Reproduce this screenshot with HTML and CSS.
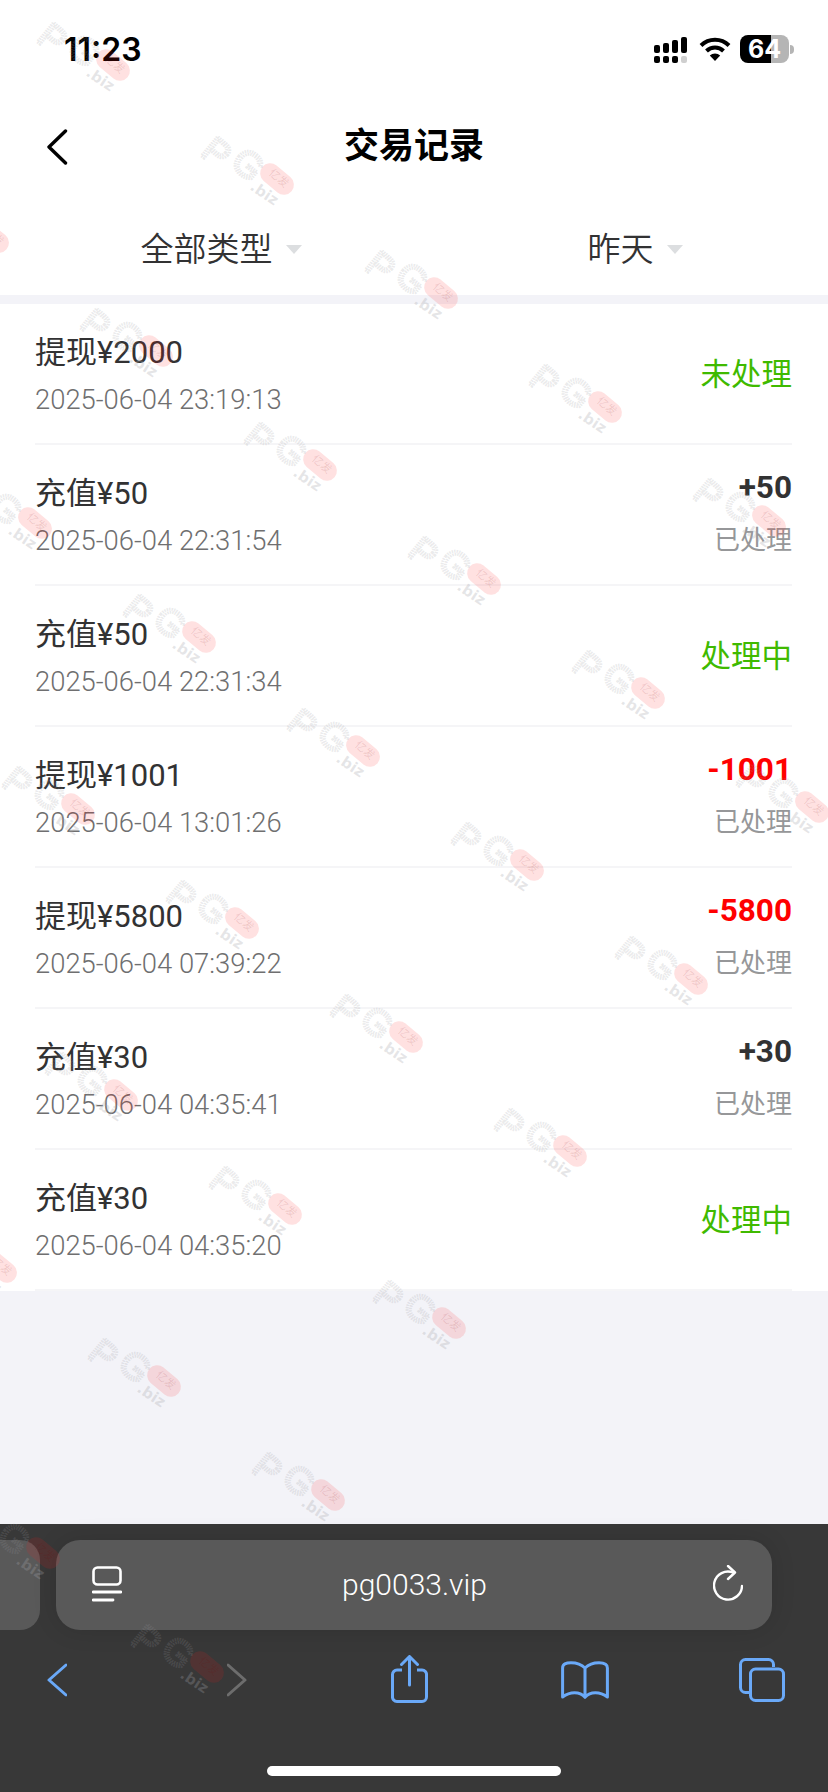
FILE: index.html
```html
<!DOCTYPE html>
<html lang="zh-CN">
<head>
<meta charset="utf-8">
<title>交易记录</title>
<link rel="stylesheet" href="styles.css">
</head>
<body>
<div class="page">
  <div class="app">
    <header class="status">
      <span class="clock">11:23</span>
      <div class="status-icons">
        <svg class="signal" width="33" height="26" viewBox="0 0 33 26"><g fill="#000"><rect x="0" y="8" width="6" height="8" rx="2"/><rect x="9" y="6" width="6" height="10" rx="2"/><rect x="18" y="3" width="6" height="13" rx="2"/><rect x="27" y="0" width="6" height="16" rx="2"/><rect x="0" y="19" width="6" height="7" rx="2"/><rect x="9" y="19" width="6" height="7" rx="2"/><rect x="18" y="19" width="6" height="7" rx="2"/><rect x="27" y="19" width="6" height="7" rx="2" fill="#cfcfcf"/></g></svg>
        <svg class="wifi" width="32" height="24" viewBox="0 0 32 24"><g fill="none" stroke="#000" stroke-width="4"><path d="M2 8.5a20 20 0 0 1 28 0"/><path d="M7.5 14a12.2 12.2 0 0 1 17 0"/></g><path d="M16 24l-5.2-5.4a7.4 7.4 0 0 1 10.4 0z" fill="#000"/></svg>
        <div class="battery"><div class="battery-body"><span class="battery-level">64</span></div><i class="battery-nub"></i></div>
      </div>
    </header>
    <nav class="topbar">
      <svg class="back" width="22" height="36" viewBox="0 0 22 36"><path d="M19.5 2L3 18l16.5 16" fill="none" stroke="#000" stroke-width="3.4" stroke-linecap="round" stroke-linejoin="round"/></svg>
      <h1 class="title">交易记录</h1>
    </nav>
    <div class="filters">
      <div class="filter"><span>全部类型</span><i class="caret"></i></div>
      <div class="filter"><span>昨天</span><i class="caret"></i></div>
    </div>
    <ul class="list">
      <li class="row"><div class="row-main"><div class="row-name">提现¥2000</div><div class="row-date">2025-06-04 23:19:13</div></div><div class="row-side"><div class="state state-green">未处理</div></div></li>
      <li class="row"><div class="row-main"><div class="row-name">充值¥50</div><div class="row-date">2025-06-04 22:31:54</div></div><div class="row-side has-amount"><div class="amount">+50</div><div class="state">已处理</div></div></li>
      <li class="row"><div class="row-main"><div class="row-name">充值¥50</div><div class="row-date">2025-06-04 22:31:34</div></div><div class="row-side"><div class="state state-green">处理中</div></div></li>
      <li class="row"><div class="row-main"><div class="row-name">提现¥1001</div><div class="row-date">2025-06-04 13:01:26</div></div><div class="row-side has-amount"><div class="amount amount-red">-1001</div><div class="state">已处理</div></div></li>
      <li class="row"><div class="row-main"><div class="row-name">提现¥5800</div><div class="row-date">2025-06-04 07:39:22</div></div><div class="row-side has-amount"><div class="amount amount-red">-5800</div><div class="state">已处理</div></div></li>
      <li class="row"><div class="row-main"><div class="row-name">充值¥30</div><div class="row-date">2025-06-04 04:35:41</div></div><div class="row-side has-amount"><div class="amount">+30</div><div class="state">已处理</div></div></li>
      <li class="row"><div class="row-main"><div class="row-name">充值¥30</div><div class="row-date">2025-06-04 04:35:20</div></div><div class="row-side"><div class="state state-green">处理中</div></div></li>
    </ul>
  </div>
  <footer class="browser">
    <div class="address-row">
      <div class="tab-stub"></div>
      <div class="address">
        <svg class="reader" width="30" height="36" viewBox="0 0 30 36"><rect x="1.5" y="1.5" width="27" height="17" rx="4" fill="none" stroke="#fff" stroke-width="2.6"/><path d="M1 26h28M1 34h20" stroke="#fff" stroke-width="2.8" stroke-linecap="round"/></svg>
        <span class="url">pg0033.vip</span>
        <svg class="reload" width="30" height="37" viewBox="0 0 30 37"><path d="M20 7.500A14 14 0 1 0 29 21" fill="none" stroke="#fff" stroke-width="2.400" stroke-linecap="round"/><path d="M15 1l7 6.500-7 6.500" fill="none" stroke="#fff" stroke-width="2.400" stroke-linecap="round" stroke-linejoin="round"/></svg>
      </div>
    </div>
    <div class="toolbar">
      <svg class="tool tool-back" width="20" height="34" viewBox="0 0 20 34"><path d="M19 2L2 17l17 15" fill="none" stroke="#6aa9f8" stroke-width="3" stroke-linecap="round" stroke-linejoin="round"/></svg>
      <svg class="tool tool-forward" width="20" height="34" viewBox="0 0 20 34"><path d="M1 2l17 15-17 15" fill="none" stroke="#6d6d6d" stroke-width="3" stroke-linecap="round" stroke-linejoin="round"/></svg>
      <svg class="tool tool-share" width="37" height="48" viewBox="0 0 37 48"><path d="M11 15H6a4.5 4.5 0 0 0-4.5 4.5v22A4.5 4.5 0 0 0 6 46.500h25a4.500 4.500 0 0 0 4.500-4.500v-22A4.500 4.500 0 0 0 31 15h-5" fill="none" stroke="#6aa9f8" stroke-width="3"/><path d="M18.500 30V2M10.500 9.500l8-8 8 8" fill="none" stroke="#6aa9f8" stroke-width="3" stroke-linecap="round" stroke-linejoin="round"/></svg>
      <svg class="tool tool-book" width="48" height="38" viewBox="0 0 48 38"><path d="M24 7C20 3 16 1.800 10 1.800 5 1.800 1.600 3 1.600 7v29c4-3 7-4.200 12-4.200 4.500 0 7.500 1.200 10.400 4.500 2.900-3.300 5.900-4.500 10.400-4.500 5 0 8 1.200 12 4.200V7c0-4-3.400-5.200-8.400-5.200C32 1.800 28 3 24 7zm0 0v29" fill="none" stroke="#6aa9f8" stroke-width="3" stroke-linejoin="round"/></svg>
      <svg class="tool tool-tabs" width="46" height="44" viewBox="0 0 46 44"><path d="M34.500 9V6.500a5 5 0 0 0-5-5H6.500a5 5 0 0 0-5 5v23a5 5 0 0 0 5 5H11" fill="none" stroke="#6aa9f8" stroke-width="3"/><rect x="11.500" y="11" width="33" height="31.500" rx="5" fill="none" stroke="#6aa9f8" stroke-width="3"/></svg>
    </div>
    <div class="home-bar"></div>
  </footer>
  <div class="watermarks">
    <svg class="wm" style="left:32px;top:13px">
      <g id="wm">
        <text class="wm-letter" transform="translate(3 27) rotate(40)">P</text>
        <text class="wm-letter" transform="translate(33 38) rotate(40)">G</text>
        <rect class="wm-pill" x="62" y="42" width="38" height="20" rx="10" transform="rotate(40 81 52)"/>
        <text class="wm-seal" transform="translate(72 47) rotate(40)">亿发</text>
        <text class="wm-small" transform="translate(53 62) rotate(34)">.biz</text>
      </g>
    </svg>
    <svg class="wm" style="left:196px;top:127px"><use href="#wm"/></svg>
    <svg class="wm" style="left:360px;top:241px"><use href="#wm"/></svg>
    <svg class="wm" style="left:524px;top:355px"><use href="#wm"/></svg>
    <svg class="wm" style="left:688px;top:469px"><use href="#wm"/></svg>
    <svg class="wm" style="left:-89px;top:185px"><use href="#wm"/></svg>
    <svg class="wm" style="left:75px;top:299px"><use href="#wm"/></svg>
    <svg class="wm" style="left:239px;top:413px"><use href="#wm"/></svg>
    <svg class="wm" style="left:403px;top:527px"><use href="#wm"/></svg>
    <svg class="wm" style="left:567px;top:641px"><use href="#wm"/></svg>
    <svg class="wm" style="left:731px;top:755px"><use href="#wm"/></svg>
    <svg class="wm" style="left:-46px;top:471px"><use href="#wm"/></svg>
    <svg class="wm" style="left:118px;top:585px"><use href="#wm"/></svg>
    <svg class="wm" style="left:282px;top:699px"><use href="#wm"/></svg>
    <svg class="wm" style="left:446px;top:813px"><use href="#wm"/></svg>
    <svg class="wm" style="left:610px;top:927px"><use href="#wm"/></svg>
    <svg class="wm" style="left:-3px;top:757px"><use href="#wm"/></svg>
    <svg class="wm" style="left:161px;top:871px"><use href="#wm"/></svg>
    <svg class="wm" style="left:325px;top:985px"><use href="#wm"/></svg>
    <svg class="wm" style="left:489px;top:1099px"><use href="#wm"/></svg>
    <svg class="wm" style="left:40px;top:1043px"><use href="#wm"/></svg>
    <svg class="wm" style="left:204px;top:1157px"><use href="#wm"/></svg>
    <svg class="wm" style="left:368px;top:1271px"><use href="#wm"/></svg>
    <svg class="wm" style="left:-81px;top:1215px"><use href="#wm"/></svg>
    <svg class="wm" style="left:83px;top:1329px"><use href="#wm"/></svg>
    <svg class="wm" style="left:247px;top:1443px"><use href="#wm"/></svg>
    <svg class="wm" style="left:-38px;top:1501px"><use href="#wm"/></svg>
    <svg class="wm" style="left:126px;top:1615px"><use href="#wm"/></svg>
  </div>
</div>
</body>
</html>
```

FILE: styles.css
```css
* { box-sizing: border-box; }
html, body { margin: 0; padding: 0; }
body {
  width: 828px;
  height: 1792px;
  overflow: hidden;
  font-family: Roboto, "Noto Sans CJK SC", sans-serif;
  color: #323233;
}
.page {
  position: relative;
  width: 828px;
  height: 1792px;
  display: flex;
  flex-direction: column;
  overflow: hidden;
}
.app {
  flex: 1;
  background: #f3f3f8;
}

/* status bar */
.status {
  height: 100px;
  background: #fff;
  display: flex;
  align-items: flex-start;
  justify-content: space-between;
  padding: 35px 34px 0 64px;
}
.clock {
  font-family: Inter, Roboto, sans-serif;
  font-size: 32px;
  line-height: 30px;
  font-weight: 600;
  color: #000;
}
.status-icons {
  display: flex;
  align-items: flex-start;
  padding-top: 2px;
}
.signal { display: block; }
.wifi { display: block; margin-left: 12px; }
.battery {
  display: flex;
  align-items: center;
  margin-left: 9px;
  margin-top: -2px;
}
.battery-body {
  width: 49px;
  height: 28px;
  border-radius: 8px;
  background: linear-gradient(90deg, #000 0, #000 31px, #b5b5b5 31px, #b5b5b5 100%);
  color: #fff;
  font-family: Inter, Roboto, sans-serif;
  font-size: 25px;
  font-weight: 700;
  line-height: 28px;
  padding-left: 8px;
}
.battery-level { letter-spacing: 0; }
.battery-nub {
  width: 4px;
  height: 9px;
  margin-left: 1px;
  background: #b5b5b5;
  border-radius: 0 4px 4px 0;
}

/* nav */
.topbar {
  height: 90px;
  padding-top: 4px;
  background: #fff;
  display: flex;
  align-items: center;
  justify-content: center;
  position: relative;
}
.back {
  position: absolute;
  left: 46px;
  top: 29px;
}
.title {
  margin: 0;
  font-size: 35px;
  font-weight: 700;
  color: #000;
  line-height: 50px;
}

/* filters */
.filters {
  height: 105px;
  background: #fff;
  display: grid;
  grid-template-columns: 1fr 1fr;
  padding-top: 24px;
  margin-bottom: 9px;
}
.filter {
  display: flex;
  align-items: center;
  justify-content: center;
  padding: 0 0 0 28px;
  height: 66px;
  font-size: 33px;
  color: #323233;
  font-weight: 350;
}
.caret {
  width: 0;
  height: 0;
  margin-left: 13px;
  margin-top: 4px;
  border-left: 8px solid transparent;
  border-right: 8px solid transparent;
  border-top: 9px solid #dcdee0;
}

/* list */
.list {
  list-style: none;
  margin: 0;
  padding: 0 36px 0 35px;
  background: #fff;
}
.row {
  height: 141px;
  border-bottom: 2px solid #f5f5f7;
  display: flex;
  justify-content: space-between;
}
.row-main { padding-top: 26px; }
.row-name {
  font-size: 31px;
  line-height: 46px;
  color: #323233;
  font-weight: 400;
}
.row-date {
  font-size: 27.400px;
  line-height: 46px;
  margin-top: 1px;
  color: #6f6f70;
  font-weight: 300;
}
.row-side {
  display: flex;
  flex-direction: column;
  align-items: flex-end;
  justify-content: center;
  padding-top: 3px;
}
.has-amount {
  justify-content: flex-start;
  padding: 21px 0 0;
}
.amount {
  font-size: 31.500px;
  line-height: 44px;
  font-weight: 700;
  color: #323233;
}
.amount-red { color: #ff0000; }
.state {
  font-size: 26px;
  line-height: 50px;
  margin-top: 5px;
  color: #969799;
}
.state-green {
  color: #3fba00;
  font-size: 30.500px;
  margin-top: 0;
}

/* browser chrome */
.browser {
  height: 268px;
  background: #383838;
  padding-top: 16px;
  display: flex;
  flex-direction: column;
}
.address-row {
  display: flex;
  height: 90px;
  gap: 16px;
}
.tab-stub {
  width: 40px;
  background: #595959;
  border-radius: 0 20px 20px 0;
}
.address {
  width: 716px;
  background: #595959;
  border-radius: 24px;
  display: flex;
  align-items: center;
  justify-content: space-between;
  padding: 0 29px 0 36px;
  box-shadow: 0 0 24px rgba(0, 0, 0, .12);
}
.url {
  font-family: Roboto, sans-serif;
  font-size: 30px;
  font-weight: 300;
  color: #fff;
  margin-top: -2px;
  margin-left: -6px;
}
.reader { margin-top: -3px; }
.reload { margin-top: -4px; }
.toolbar {
  display: flex;
  align-items: flex-start;
  height: 136px;
  padding: 33px 0 0 47px;
}
.tool { display: block; flex: none; }
.tool-forward { margin-left: 160px; }
.tool-share { margin-left: 144px; margin-top: -8px; }
.tool-book { margin-left: 133px; margin-top: -2px; }
.tool-tabs { margin-left: 130px; margin-top: -5px; }
.home-bar {
  width: 294px;
  height: 10px;
  border-radius: 5px;
  background: #fff;
  margin: 0 auto;
}

/* watermark */
.watermarks {
  position: absolute;
  inset: 0;
  pointer-events: none;
}
.wm {
  position: absolute;
  width: 100px;
  height: 90px;
  overflow: visible;
}
.wm-letter {
  font-family: "Liberation Sans", sans-serif;
  font-size: 37px;
  fill: none;
  stroke: rgba(150, 150, 155, .2);
  stroke-width: 3;
  stroke-dasharray: 1.500 1;
}
.wm-pill { fill: rgba(255, 20, 20, .13); }
.wm-seal {
  font-family: "Noto Sans CJK SC", sans-serif;
  font-size: 11px;
  fill: rgba(120, 0, 0, .12);
}
.wm-small {
  font-family: "DejaVu Sans", sans-serif;
  font-size: 15px;
  font-weight: 700;
  fill: rgba(165, 165, 170, .28);
}
```
